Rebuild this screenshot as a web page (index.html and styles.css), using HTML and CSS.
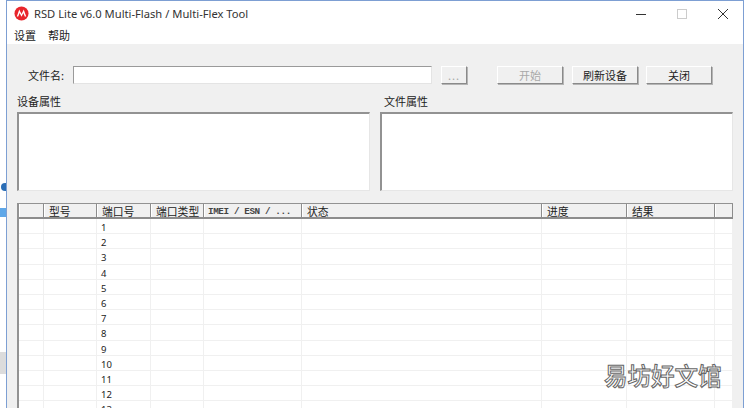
FILE: index.html
```html
<!DOCTYPE html>
<html lang="zh">
<head>
<meta charset="utf-8">
<title>RSD Lite</title>
<link rel="stylesheet" href="styles.css">
</head>
<body>
<div class="desk-bit desk-blob"></div>
<div class="desk-bit desk-monitor"></div>
<div class="desk-bit desk-block"></div>
<main class="window">
  <header class="titlebar">
    <svg class="logo" viewBox="0 0 16 16" aria-hidden="true">
      <circle cx="8" cy="8" r="7.5" fill="#e8252b"/>
      <path d="M3 11.2 L5.6 3.8 L8 8.6 L10.4 3.8 L13 11.2 L11.5 11.2 L10 7.4 L8 11.4 L6 7.4 L4.5 11.2 Z" fill="#fff"/>
    </svg>
    <span class="title">RSD Lite v6.0 Multi-Flash / Multi-Flex Tool</span>
    <div class="controls">
      <svg class="ctl" viewBox="0 0 12 12"><path d="M1 6.5H11" stroke="#333" fill="none"/></svg>
      <svg class="ctl" viewBox="0 0 12 12"><rect x="1.5" y="1.5" width="9" height="9" stroke="#ccc" fill="none"/></svg>
      <svg class="ctl" viewBox="0 0 12 12"><path d="M1 1L11 11M11 1L1 11" stroke="#333" fill="none"/></svg>
    </div>
  </header>
  <nav class="menubar"><span>设置</span><span>帮助</span></nav>
  <section class="content">
    <div class="toolbar">
      <label class="file-label">文件名:</label>
      <div class="file-input"></div>
      <button class="btn btn-browse" disabled>...</button>
      <button class="btn btn-act btn-start" disabled>开始</button>
      <button class="btn btn-act btn-mid">刷新设备</button>
      <button class="btn btn-act">关闭</button>
    </div>
    <div class="groups">
      <div class="group"><div class="group-label">设备属性</div><div class="group-box"></div></div>
      <div class="group group-file"><div class="group-label">文件属性</div><div class="group-box"></div></div>
    </div>
    <div class="grid">
      <div class="row head">
        <div></div><div>型号</div><div>端口号</div><div>端口类型</div><div class="mono">IMEI / ESN / ...</div><div>状态</div><div>进度</div><div>结果</div><div></div>
      </div>
      <div class="row"><div></div><div></div><div>1</div><div></div><div></div><div></div><div></div><div></div><div></div></div>
      <div class="row"><div></div><div></div><div>2</div><div></div><div></div><div></div><div></div><div></div><div></div></div>
      <div class="row"><div></div><div></div><div>3</div><div></div><div></div><div></div><div></div><div></div><div></div></div>
      <div class="row"><div></div><div></div><div>4</div><div></div><div></div><div></div><div></div><div></div><div></div></div>
      <div class="row"><div></div><div></div><div>5</div><div></div><div></div><div></div><div></div><div></div><div></div></div>
      <div class="row"><div></div><div></div><div>6</div><div></div><div></div><div></div><div></div><div></div><div></div></div>
      <div class="row"><div></div><div></div><div>7</div><div></div><div></div><div></div><div></div><div></div><div></div></div>
      <div class="row"><div></div><div></div><div>8</div><div></div><div></div><div></div><div></div><div></div><div></div></div>
      <div class="row"><div></div><div></div><div>9</div><div></div><div></div><div></div><div></div><div></div><div></div></div>
      <div class="row"><div></div><div></div><div>10</div><div></div><div></div><div></div><div></div><div></div><div></div></div>
      <div class="row"><div></div><div></div><div>11</div><div></div><div></div><div></div><div></div><div></div><div></div></div>
      <div class="row"><div></div><div></div><div>12</div><div></div><div></div><div></div><div></div><div></div><div></div></div>
      <div class="row"><div></div><div></div><div>13</div><div></div><div></div><div></div><div></div><div></div><div></div></div>
    </div>
  </section>
</main>
<div class="watermark">易坊好文馆</div>
</body>
</html>
```
FILE: styles.css
```css
* { box-sizing: border-box; }
html, body { margin: 0; height: 408px; overflow: hidden; background: #fff; }
body {
  position: relative;
  padding-left: 6px;
  font-family: "Noto Sans CJK SC", "Noto Sans", sans-serif;
  font-size: 11px;
  color: #222;
}
.desk-bit { position: absolute; left: 0; }
.desk-blob { top: 183px; left: 1px; width: 5px; height: 8px; background: #2a6db5; border-radius: 4px 0 0 4px; }
.desk-monitor { top: 208px; width: 6px; height: 9px; background: #5ea7e8; }
.desk-block { top: 352px; width: 6px; height: 22px; background: #dcdcdc; }

.window {
  width: 738px;
  height: 408px;
  border: 1px solid #7d9fd3;
  border-bottom: 0;
  display: flex;
  flex-direction: column;
  background: #f0f0f0;
}
.titlebar {
  height: 27px;
  background: #fff;
  display: flex;
  align-items: center;
  padding: 0 0 2px 7px;
  flex: none;
}
.logo { width: 15px; height: 15px; margin-right: 5px; }
.title { font-family: "Noto Sans", sans-serif; font-size: 11.2px; color: #333; white-space: nowrap; }
.controls { margin-left: auto; display: flex; gap: 29px; padding-right: 14px; }
.ctl { width: 12px; height: 12px; display: block; }
.menubar {
  height: 16px;
  background: #fff;
  display: flex;
  gap: 12px;
  padding-left: 7px;
  font-size: 11px;
  line-height: 14px;
  flex: none;
}
.content { flex: 1; min-height: 0; overflow: hidden; padding: 22px 9px 0 10px; }
.toolbar { display: flex; align-items: center; height: 18px; }
.file-label { margin-left: 11px; width: 45px; font-size: 11px; line-height: 18px; }
.file-input {
  width: 359px;
  height: 18px;
  background: #fff;
  border: 1px solid #e4e4e4;
  border-top: 1px solid #9a9a9a;
  border-left: 1px solid #9a9a9a;
}
.btn {
  height: 18px;
  padding: 0;
  background: #f0f0f0;
  border: 1px solid;
  border-color: #fff #8a8a8a #8a8a8a #fff;
  box-shadow: 1px 1px 0 #b5b5b5;
  font: 11px/14px "Noto Sans CJK SC", sans-serif;
  color: #222;
}
.btn:disabled { color: #a8a8a8; }
.btn-browse { width: 26px; margin-left: 9px; letter-spacing: 1px; }
.btn-act { width: 66px; }
.btn-start { margin-left: 30px; }
.btn-mid { margin: 0 8px 0 9px; }

.groups { display: flex; gap: 10px; margin-top: 10px; }
.group { width: 353px; }
.group-label { height: 18px; line-height: 15px; font-size: 11px; }
.group-file .group-label { padding-left: 4px; }
.group-box {
  height: 79px;
  background: #fff;
  border: 1px solid #e6e6e6;
  border-top: 2px solid #929292;
  border-left: 2px solid #929292;
}
.grid {
  margin-top: 12px;
  width: 716px;
  height: 260px;
  overflow: hidden;
  background: #fff;
  border-left: 2px solid #929292;
  border-top: 1px solid #929292;
}
.row {
  display: grid;
  grid-template-columns: 25px 53px 54px 53px 98px 240px 85px 88px 18px;
  height: 15.2px;
  border-bottom: 1px solid #f0f0f0;
}
.row > div {
  border-right: 1px solid #f0f0f0;
  padding-left: 4px;
  font-family: "Noto Sans", sans-serif;
  font-size: 9.5px;
  line-height: 17px;
  white-space: nowrap;
}
.row.head { height: 15px; grid-template-rows: 13px; background: #f0f0f0; border-bottom: 2px solid #8c8c8c; }
.row.head > div {
  border-right: 1px solid #8c8c8c;
  border-left: 1px solid #fff;
  padding-left: 4px;
  font-family: "Noto Sans CJK SC", sans-serif;
  font-size: 10.8px;
  line-height: 15px;
}
.row.head > div.mono { font-family: "Liberation Mono", monospace; font-size: 9.3px; letter-spacing: -0.4px; font-weight: bold; padding-left: 3px; color: #444; }

.watermark {
  position: absolute;
  left: 604px;
  top: 358px;
  font-size: 23.5px;
  line-height: 34px;
  font-weight: 500;
  color: #fff;
  -webkit-text-stroke: 1px #666;
  white-space: nowrap;
}
```
